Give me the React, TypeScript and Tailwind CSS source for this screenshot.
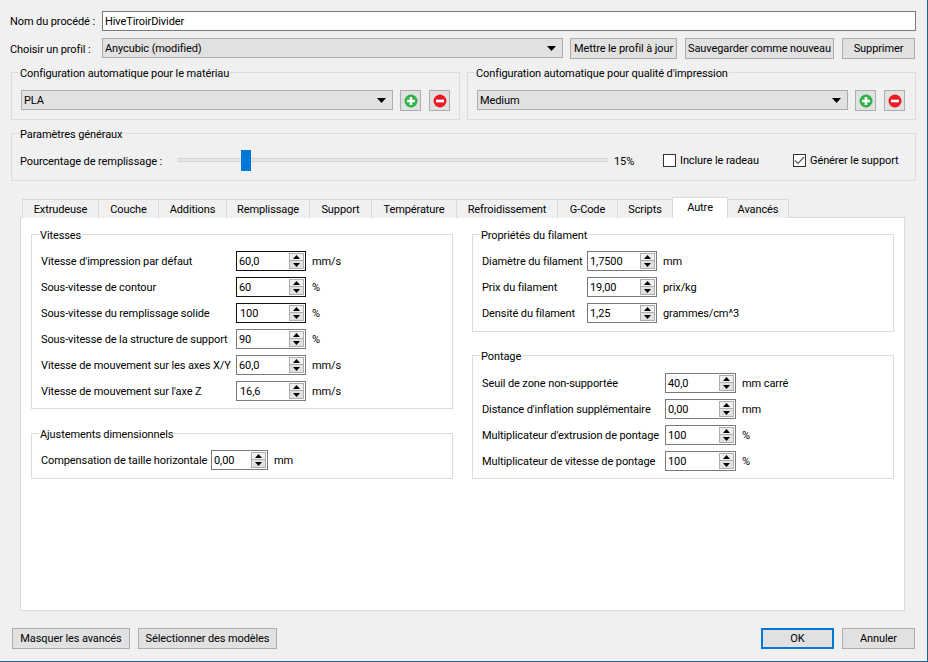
import React from "react";

function Arrow({ up = false }: { up?: boolean }) {
  return (
    <svg width="7" height="4" viewBox="0 0 7 4" className="block">
      <polygon points={up ? "3.5,0 7,4 0,4" : "0,0 7,0 3.5,4"} fill="#000" />
    </svg>
  );
}

function Combo({ text, className }: { text: string; className: string }) {
  return (
    <div className={`h-[20px] flex items-center border border-[#adadad] bg-[#e1e1e1] pl-[2px] pr-[6px] ${className}`}>
      <span className="flex-1 leading-[18px] pt-[2px]">{text}</span>
      <svg width="9" height="5" viewBox="0 0 9 5" className="block">
        <polygon points="0,0 9,0 4.5,5" fill="#000" />
      </svg>
    </div>
  );
}

function Btn({ text, className, primary = false }: { text: string; className: string; primary?: boolean }) {
  return (
    <div
      className={`h-[21px] flex items-center justify-center bg-[#e1e1e1] whitespace-nowrap shrink-0 pt-[2px] ${
        primary ? "border-2 border-[#0078d7]" : "border border-[#adadad]"
      } ${className}`}
    >
      {text}
    </div>
  );
}

function IconBtn({ plus = false }: { plus?: boolean }) {
  return (
    <div className="w-[21px] h-[21px] shrink-0 flex items-center justify-center bg-[#e1e1e1] border border-[#adadad]">
      <svg width="14" height="14" viewBox="0 0 14 14" className="block">
        <circle cx="7" cy="7" r="6.5" fill={plus ? "#2fb344" : "#ed1c24"} />
        {plus ? (
          <path d="M5.7 3h2.6v2.7H11v2.6H8.3V11H5.7V8.3H3V5.7h2.7z" fill="#fff" />
        ) : (
          <rect x="3" y="5.7" width="8" height="2.6" fill="#fff" />
        )}
      </svg>
    </div>
  );
}

function Check({ checked = false, text, className }: { checked?: boolean; text: string; className: string }) {
  return (
    <div className={`flex items-center h-[14px] shrink-0 ${className}`}>
      <div className="w-[13px] h-[13px] border border-[#333333] bg-white shrink-0 flex items-center justify-center">
        {checked && (
          <svg width="11" height="9" viewBox="0 0 11 9" className="block">
            <polyline points="1,4.5 4,7.5 10,1" fill="none" stroke="#555555" strokeWidth="1.2" />
          </svg>
        )}
      </div>
      <span className="ml-[4px] whitespace-nowrap pt-[3px]">{text}</span>
    </div>
  );
}

function Spin({ value, className, dark = false, pad = "pl-[2px]" }: { value: string; className: string; dark?: boolean; pad?: string }) {
  return (
    <div
      className={`h-[20px] shrink-0 flex items-center bg-white border ${
        dark ? "border-[#111111]" : "border-[#7a7a7a]"
      } ${pad} pr-[1px] ${className}`}
    >
      <span className="flex-1 leading-[18px] pt-[2px]">{value}</span>
      <div className="w-[15px] h-[16px] flex flex-col shrink-0">
        <div className="h-[8px] flex items-center justify-center bg-[#f0f0f0] border border-[#adadad]">
          <Arrow up />
        </div>
        <div className="h-[8px] flex items-center justify-center bg-[#e1e1e1] border border-t-0 border-[#adadad]">
          <Arrow />
        </div>
      </div>
    </div>
  );
}

type RowData = { label: string; value: string; unit: string; dark?: boolean; pad?: string };

function Rows({ rows, labelW, spinW, top }: { rows: RowData[]; labelW: string; spinW: string; top: string }) {
  return (
    <div className={`flex flex-col gap-[6px] pl-[9px] ${top}`}>
      {rows.map((r) => (
        <div key={r.label} className="flex items-center h-[20px]">
          <span className={`whitespace-nowrap shrink-0 pt-[3px] ${labelW}`}>{r.label}</span>
          <Spin value={r.value} className={spinW} dark={r.dark} pad={r.pad} />
          <span className="ml-[6px] whitespace-nowrap pt-[3px]">{r.unit}</span>
        </div>
      ))}
    </div>
  );
}

function Title({ text, bg }: { text: string; bg: string }) {
  return <div className={`-mt-[8px] ml-[7px] w-fit h-[16px] leading-[18px] px-[1px] whitespace-nowrap ${bg}`}>{text}</div>;
}

const tabs: [string, string][] = [
  ["Extrudeuse", "w-[77px]"],
  ["Couche", "w-[61px]"],
  ["Additions", "w-[69px]"],
  ["Remplissage", "w-[84px]"],
  ["Support", "w-[63px]"],
  ["Température", "w-[86px]"],
  ["Refroidissement", "w-[102px]"],
  ["G-Code", "w-[61px]"],
  ["Scripts", "w-[56px]"],
];

export default function App() {
  return (
    <div className="w-[928px] h-[662px] overflow-hidden bg-[#f0f0f0] border-r border-b border-[#1b6496] pl-[11px] pr-[11px] pt-[11px] text-[11px] tracking-[-0.1px] text-black [font-family:Roboto,sans-serif]">
      <div className="flex items-center h-[20px]">
        <span className="w-[92px] -ml-[1px] shrink-0 whitespace-nowrap pt-[3px]">Nom du procédé :</span>
        <div className="flex-1 h-[20px] border border-[#7a7a7a] bg-white pl-[2px] leading-[18px] pt-[1px]">HiveTiroirDivider</div>
      </div>

      <div className="flex items-center h-[21px] mt-[7px]">
        <span className="w-[92px] -ml-[1px] shrink-0 whitespace-nowrap pt-[3px]">Choisir un profil :</span>
        <Combo text="Anycubic (modified)" className="w-[461px] -mt-[1px]" />
        <Btn text="Mettre le profil à jour" className="w-[107px] ml-[7px]" />
        <Btn text="Sauvegarder comme nouveau" className="w-[149px] ml-[8px]" />
        <Btn text="Supprimer" className="w-[73px] ml-[8px]" />
      </div>

      <div className="flex gap-[7px] mt-[13px]">
        <div className="w-[449px] h-[48px] border border-[#dcdcdc]">
          <Title text="Configuration automatique pour le matériau" bg="bg-[#f0f0f0]" />
          <div className="flex items-start mt-[9px] ml-[9px]">
            <Combo text="PLA" className="w-[372px]" />
            <div className="ml-[7px]"><IconBtn plus /></div>
            <div className="ml-[8px]"><IconBtn /></div>
          </div>
        </div>
        <div className="w-[449px] h-[48px] border border-[#dcdcdc]">
          <Title text="Configuration automatique pour qualité d'impression" bg="bg-[#f0f0f0]" />
          <div className="flex items-start mt-[9px] ml-[9px]">
            <Combo text="Medium" className="w-[371px]" />
            <div className="ml-[7px]"><IconBtn plus /></div>
            <div className="ml-[8px]"><IconBtn /></div>
          </div>
        </div>
      </div>

      <div className="h-[48px] mt-[13px] border border-[#dcdcdc]">
        <Title text="Paramètres généraux" bg="bg-[#f0f0f0]" />
        <div className="flex items-center h-[21px] mt-[8px] pl-[8px]">
          <span className="w-[158px] shrink-0 whitespace-nowrap pt-[4px]">Pourcentage de remplissage :</span>
          <div className="relative w-[430px] h-[4px] shrink-0 bg-[#e7e7e7] border border-[#d6d6d6] -mt-[1px]">
            <div className="absolute left-[62px] -top-[9px] w-[10px] h-[21px] bg-[#0078d7]" />
          </div>
          <span className="ml-[6px] w-[49px] shrink-0 pt-[4px]">15%</span>
          <Check text="Inclure le radeau" className="w-[130px] -mt-[1px]" />
          <Check checked text="Générer le support" className="-mt-[1px]" />
        </div>
      </div>

      <div className="flex items-end h-[21px] mt-[16px] ml-[11px] relative z-10 -mb-[1px]">
        {tabs.map(([t, w], i) => (
          <div
            key={t}
            className={`h-[19px] pt-[2px] flex items-center justify-center border border-b-0 border-[#d9d9d9] bg-[#f0f0f0] ${w} ${i > 0 ? "-ml-[1px]" : ""}`}
          >
            {t}
          </div>
        ))}
        <div className="h-[21px] w-[56px] -ml-[1px] flex items-center justify-center border border-b-0 border-[#d9d9d9] bg-white">Autre</div>
        <div className="h-[19px] w-[62px] -ml-[1px] pt-[2px] flex items-center justify-center border border-b-0 border-[#d9d9d9] bg-[#f0f0f0]">Avancés</div>
      </div>

      <div className="ml-[9px] w-[885px] h-[394px] bg-white border border-[#d9d9d9] pl-[10px] pt-[16px] flex gap-[19px]">
        <div className="w-[422px] flex flex-col gap-[24px]">
          <div className="h-[175px] border border-[#dcdcdc]">
            <Title text="Vitesses" bg="bg-white" />
            <Rows
              top="mt-[8px]"
              labelW="w-[195px]"
              spinW="w-[70px]"
              rows={[
                { label: "Vitesse d'impression par défaut", value: "60,0", unit: "mm/s", dark: true },
                { label: "Sous-vitesse de contour", value: "60", unit: "%", dark: true },
                { label: "Sous-vitesse du remplissage solide", value: "100", unit: "%", dark: true, pad: "pl-[3px]" },
                { label: "Sous-vitesse de la structure de support", value: "90", unit: "%" },
                { label: "Vitesse de mouvement sur les axes X/Y", value: "60,0", unit: "mm/s" },
                { label: "Vitesse de mouvement sur l'axe Z", value: "16,6", unit: "mm/s", pad: "pl-[3px]" },
              ]}
            />
          </div>
          <div className="h-[46px] border border-[#dcdcdc]">
            <Title text="Ajustements dimensionnels" bg="bg-white" />
            <Rows
              top="mt-[8px]"
              labelW="w-[170px]"
              spinW="w-[57px]"
              rows={[{ label: "Compensation de taille horizontale", value: "0,00", unit: "mm" }]}
            />
          </div>
        </div>
        <div className="w-[422px] flex flex-col gap-[23px]">
          <div className="h-[98px] border border-[#dcdcdc]">
            <Title text="Propriétés du filament" bg="bg-white" />
            <Rows
              top="mt-[8px]"
              labelW="w-[105px]"
              spinW="w-[70px]"
              rows={[
                { label: "Diamètre du filament", value: "1,7500", unit: "mm" },
                { label: "Prix du filament", value: "19,00", unit: "prix/kg" },
                { label: "Densité du filament", value: "1,25", unit: "grammes/cm^3" },
              ]}
            />
          </div>
          <div className="h-[124px] border border-[#dcdcdc]">
            <Title text="Pontage" bg="bg-white" />
            <Rows
              top="mt-[9px]"
              labelW="w-[183px]"
              spinW="w-[71px]"
              rows={[
                { label: "Seuil de zone non-supportée", value: "40,0", unit: "mm carré" },
                { label: "Distance d'inflation supplémentaire", value: "0,00", unit: "mm" },
                { label: "Multiplicateur d'extrusion de pontage", value: "100", unit: "%" },
                { label: "Multiplicateur de vitesse de pontage", value: "100", unit: "%" },
              ]}
            />
          </div>
        </div>
      </div>

      <div className="flex items-center h-[21px] mt-[17px] ml-[1px]">
        <Btn text="Masquer les avancés" className="w-[118px]" />
        <Btn text="Sélectionner des modèles" className="w-[139px] ml-[8px]" />
        <div className="flex-1" />
        <Btn primary text="OK" className="w-[73px]" />
        <Btn text="Annuler" className="w-[73px] ml-[8px] mr-[1px]" />
      </div>
    </div>
  );
}
